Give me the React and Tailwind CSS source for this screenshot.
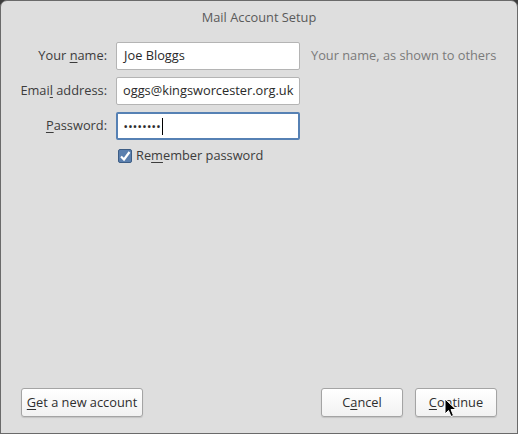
export default function App() {
  const font = { fontFamily: '"Open Sans", "Noto Sans", sans-serif' };
  const btn =
    "h-[29px] whitespace-nowrap rounded-[3px] border border-[#a4a4a4] bg-gradient-to-b from-white to-[#f2f2f2] shadow-[0_1px_1px_rgba(0,0,0,0.12)] text-[#2e2e2e]";
  return (
    <div
      style={font}
      className="w-[518px] h-[434px] bg-[#3c3c3c] text-[12.8px] text-[#3c3c3c]"
    >
      <div className="relative w-full h-full flex flex-col rounded-t-[7px] border border-[#6a6a6a] bg-[#dedede]">
        <div className="h-[33px] flex items-center justify-center text-[#5a5a5a] pt-[1px]">
          Mail Account Setup
        </div>

        <div className="flex flex-col gap-[7px] mt-[8px]">
          <div className="flex items-center">
            <label className="w-[106px] text-right">
              Your <span className="underline underline-offset-2">n</span>ame:
            </label>
            <div className="ml-[9px] w-[184px] h-[28px] bg-white border border-[#b4b4b4] rounded-[2px] flex items-center pl-[7px] text-[#2a2a2a]">
              Joe Bloggs
            </div>
            <div className="ml-[11px] text-[#7a7a7a] whitespace-nowrap">
              Your name, as shown to others
            </div>
          </div>

          <div className="flex items-center">
            <label className="w-[106px] text-right">
              Emai<span className="underline underline-offset-2">l</span> address:
            </label>
            <div className="ml-[9px] w-[184px] h-[28px] bg-white border border-[#b4b4b4] rounded-[2px] flex items-center pl-[6px] text-[#2a2a2a] overflow-hidden whitespace-nowrap">
              oggs@kingsworcester.org.uk
            </div>
          </div>

          <div className="flex items-center">
            <label className="w-[106px] text-right">
              <span className="underline underline-offset-2">P</span>assword:
            </label>
            <div className="ml-[9px] w-[184px] h-[28px] bg-white border-2 border-[#5681b4] rounded-[2px] flex items-center pl-[6px] text-[#2a2a2a]">
              <span className="text-[9px] font-bold tracking-[1.3px] leading-none">••••••••</span>
              <span className="ml-[1px] w-[1px] h-[17px] bg-black" />
            </div>
          </div>

          <div className="flex items-center ml-[117px] -mt-[1px]">
            <div className="w-[14px] h-[14px] rounded-[2px] border border-[#3d5d85] bg-[#5a7fae] flex items-center justify-center">
              <svg width="12" height="12" viewBox="0 0 12 12">
                <path d="M2 6.5 L5 9.5 L10.5 2" fill="none" stroke="white" strokeWidth="2.2" />
              </svg>
            </div>
            <span className="ml-[4px]">
              Re<span className="underline underline-offset-2">m</span>ember password
            </span>
          </div>
        </div>

        <div className="flex-1" />

        <div className="flex items-center px-[20px] pb-[16px]">
          <button className={btn + " w-[122px]"}>
            <span className="underline underline-offset-2">G</span>et a new account
          </button>
          <div className="flex-1" />
          <button className={btn + " w-[82px]"}>
            C<span className="underline underline-offset-2">a</span>ncel
          </button>
          <button className={btn + " relative ml-[12px] w-[82px]"}>
            <span className="underline underline-offset-2">C</span>ontinue
            <svg
              className="absolute left-[28px] top-[9px]"
              width="14"
              height="20"
              viewBox="0 0 14 20"
            >
              <path
                d="M1 1 L1 16 L4.5 12.5 L7 18.5 L9.5 17.5 L7 11.5 L12 11.5 Z"
                fill="black"
                stroke="white"
                strokeWidth="1"
              />
            </svg>
          </button>
        </div>
      </div>
    </div>
  );
}
